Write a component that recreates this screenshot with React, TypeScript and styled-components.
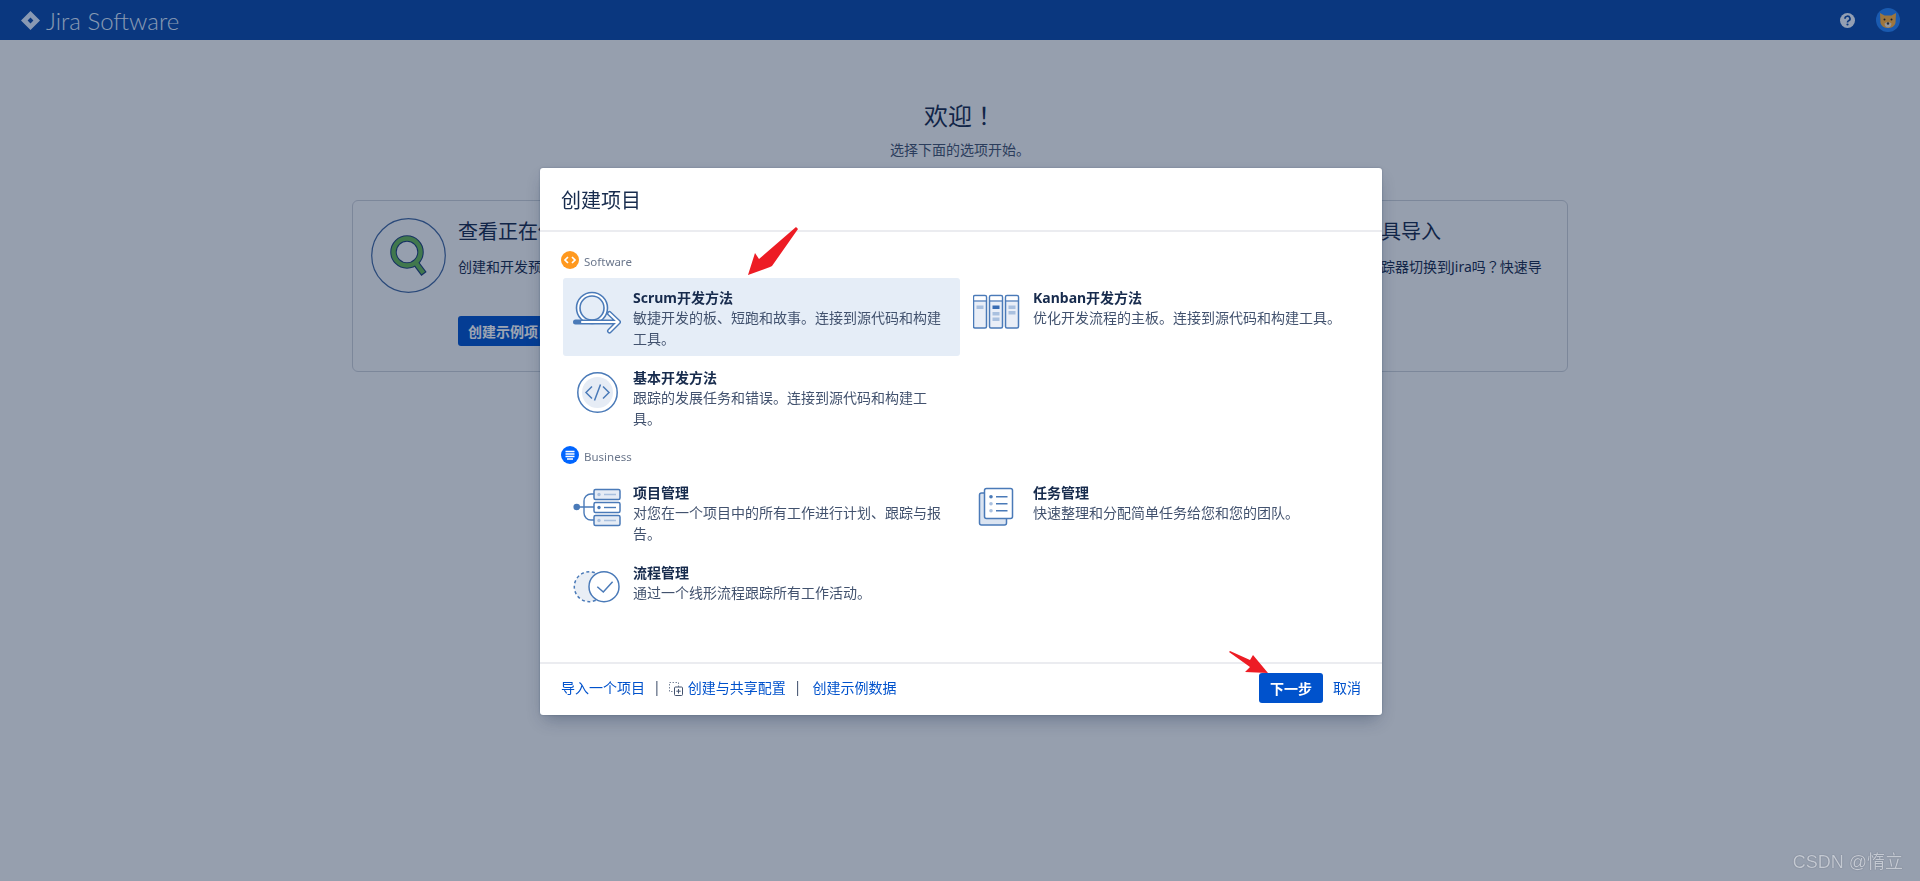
import React from "react";
import styled, { createGlobalStyle } from "styled-components";

const GlobalStyle = createGlobalStyle`
    html, body {
        margin: 0;
        height: 100%;
        overflow: hidden;
        background: #f4f5f7;
        font-family: "Noto Sans", "Noto Sans CJK SC", sans-serif;
        color: #172b4d;
    }
`;

const line = "#4a7ab8";
const pale = "#e6ecf5";
const mid = "#a9c0df";

const ScrumIcon = () => (
    <IconSvg viewBox="0 0 48 48">
        <circle cx="19" cy="18" r="15.5" fill="#fff" stroke={line} strokeWidth="1.6" />
        <circle cx="19" cy="18" r="12" fill="#e5edf7" stroke={line} strokeWidth="1.6" />
        <path d="M2.5 32 H45 M36.5 23.5 L45.5 32 L36.5 41" fill="none" stroke={line} strokeWidth="5" strokeLinecap="round" strokeLinejoin="round" />
        <path d="M9 32 H45 M36.5 23.5 L45.5 32 L36.5 41" fill="none" stroke="#fff" strokeWidth="2.2" strokeLinecap="round" strokeLinejoin="round" />
    </IconSvg>
);

const CodeIcon = () => (
    <IconSvg viewBox="0 0 48 48">
        <circle cx="24.5" cy="22.5" r="19.7" fill="#fff" stroke={line} strokeWidth="1.5" />
        <circle cx="24.5" cy="22.5" r="15.5" fill={pale} />
        <path d="M19 16.5 L13 22.5 L19 28.5 M30 16.5 L36 22.5 L30 28.5 M27.5 14.5 L21.5 30.5" fill="none" stroke={line} strokeWidth="1.5" />
    </IconSvg>
);

const KanbanIcon = () => (
    <IconSvg viewBox="0 0 48 48">
        {[0.5, 16.5, 32.5].map((x) => (
            <g key={x}>
                <rect x={x} y="5.5" width="13" height="32.5" rx="1.5" fill="#e9eef7" stroke={line} strokeWidth="1.5" />
                <path d={`M${x + 1} 6.5 H${x + 12} V10.5 H${x + 1} Z`} fill="#fff" />
                <path d={`M${x} 11 H${x + 13}`} stroke={line} strokeWidth="1.2" />
            </g>
        ))}
        <rect x="3.5" y="15.5" width="7" height="3.5" fill={mid} />
        <rect x="19.5" y="15.5" width="7" height="3.5" fill="#3a6db3" />
        <rect x="19.5" y="22" width="7" height="3.5" fill={mid} />
        <rect x="19.5" y="27.5" width="7" height="3.5" fill={mid} />
        <rect x="35.5" y="15.5" width="7" height="3.5" fill={mid} />
        <rect x="35.5" y="21" width="7" height="3.5" fill={mid} />
    </IconSvg>
);

const TreeIcon = () => (
    <IconSvg viewBox="0 0 48 48">
        <circle cx="3.7" cy="22" r="3.3" fill={line} />
        <path d="M4 22 H21 M21 9 H18 A7 7 0 0 0 11 16 V28 A7 7 0 0 0 18 35 H21" fill="none" stroke={line} strokeWidth="1.4" />
        <rect x="21" y="4.5" width="26" height="10" rx="1.5" fill={pale} stroke={line} strokeWidth="1.5" />
        <rect x="21" y="17.5" width="26" height="10" rx="1.5" fill="#fff" stroke={line} strokeWidth="1.5" />
        <rect x="21" y="30.5" width="26" height="10" rx="1.5" fill={pale} stroke={line} strokeWidth="1.5" />
        <circle cx="26" cy="9.5" r="1.7" fill={mid} />
        <circle cx="26" cy="22.5" r="1.7" fill={line} />
        <circle cx="26" cy="35.5" r="1.7" fill={mid} />
        <path d="M31 9.5 H43 M31 35.5 H43" stroke={mid} strokeWidth="1.4" />
        <path d="M31 22.5 H43" stroke={line} strokeWidth="1.4" />
    </IconSvg>
);

const TaskIcon = () => (
    <IconSvg viewBox="0 0 48 48">
        <rect x="6.5" y="8" width="27" height="32" rx="2" fill="#dbe4f1" stroke={line} strokeWidth="1.5" />
        <rect x="11.5" y="3.5" width="28" height="30" rx="2" fill="#fff" stroke={line} strokeWidth="1.5" />
        <circle cx="18" cy="11.7" r="1.8" fill={line} />
        <circle cx="18" cy="18.7" r="1.8" fill={mid} />
        <circle cx="18" cy="25.7" r="1.8" fill={mid} />
        <path d="M23 11.7 H34.5 M23 18.7 H34.5 M23 25.7 H34.5" stroke={line} strokeWidth="1.5" />
    </IconSvg>
);

const FlowIcon = () => (
    <IconSvg viewBox="0 0 48 48">
        <circle cx="16.3" cy="21.7" r="15" fill="#e9eef5" stroke={line} strokeWidth="1.5" strokeDasharray="3 2.6" />
        <circle cx="31" cy="21.7" r="15" fill="#fff" stroke={line} strokeWidth="1.5" />
        <path d="M24.3 21.7 L30.3 27 L39.6 16.7" fill="none" stroke={line} strokeWidth="1.5" />
    </IconSvg>
);

const MagnifierIcon = () => (
    <svg width="75" height="75" viewBox="0 0 75 75">
        <circle cx="37.5" cy="37.5" r="36.8" fill="none" stroke="#4067a0" strokeWidth="1.2" />
        <path d="M44 44 L53 56" stroke="#1e3f78" strokeWidth="6.5" />
        <circle cx="36" cy="34" r="13.5" fill="none" stroke="#1e3f78" strokeWidth="6.5" />
        <path d="M44.5 44.5 L52.3 55" stroke="#66b556" strokeWidth="4.4" />
        <circle cx="36" cy="34" r="13.5" fill="none" stroke="#66b556" strokeWidth="4.4" />
    </svg>
);

type ProjectRow = { icon: React.ReactNode; title: string; desc: string; selected?: boolean };

const softwareRows: ProjectRow[] = [
    { icon: <ScrumIcon />, title: "Scrum开发方法", desc: "敏捷开发的板、短跑和故事。连接到源代码和构建工具。", selected: true },
    { icon: <KanbanIcon />, title: "Kanban开发方法", desc: "优化开发流程的主板。连接到源代码和构建工具。" },
    { icon: <CodeIcon />, title: "基本开发方法", desc: "跟踪的发展任务和错误。连接到源代码和构建工具。" },
];

const businessRows: ProjectRow[] = [
    { icon: <TreeIcon />, title: "项目管理", desc: "对您在一个项目中的所有工作进行计划、跟踪与报告。" },
    { icon: <TaskIcon />, title: "任务管理", desc: "快速整理和分配简单任务给您和您的团队。" },
    { icon: <FlowIcon />, title: "流程管理", desc: "通过一个线形流程跟踪所有工作活动。" },
];

const Rows = ({ rows }: { rows: ProjectRow[] }) => (
    <RowGrid>
        {rows.map((row) => (
            <Row key={row.title} $selected={row.selected}>
                {row.icon}
                <RowText>
                    <RowTitle>{row.title}</RowTitle>
                    <RowDesc>{row.desc}</RowDesc>
                </RowText>
            </Row>
        ))}
    </RowGrid>
);

export default function App() {
    return (
        <>
            <GlobalStyle />
            <Header>
                <Logo>
                    <svg width="19" height="19" viewBox="0 0 19 19">
                        <path
                            fillRule="evenodd"
                            d="M9.5 0 L19 9.5 L9.5 19 L0 9.5 Z M9.5 6.6 L6.6 9.5 L9.5 12.4 L12.4 9.5 Z"
                            fill="#deebff"
                        />
                    </svg>
                    <LogoText>Jira Software</LogoText>
                </Logo>
                <HeaderIcons>
                    <svg width="15" height="15" viewBox="0 0 15 15">
                        <circle cx="7.5" cy="7.5" r="7.5" fill="#f0f6ff" />
                        <path d="M5 5.7 A2.5 2.4 0 1 1 8.6 7.8 Q7.5 8.3 7.5 9.4" fill="none" stroke="#0b49a8" strokeWidth="1.7" />
                        <circle cx="7.5" cy="11.5" r="1.1" fill="#0b49a8" />
                    </svg>
                    <svg width="24" height="24" viewBox="0 0 24 24">
                        <circle cx="12" cy="12" r="12" fill="#2583fa" />
                        <path d="M4 5 L8.5 7.5 H15.5 L20 5 L19.5 15 Q18 20 12 20 Q6 20 4.5 15 Z" fill="#ffb13d" />
                        <path d="M8.5 15.5 Q12 13 15.5 15.5 Q15 19.5 12 19.5 Q9 19.5 8.5 15.5 Z" fill="#f2e6d8" />
                        <circle cx="8.5" cy="11.5" r="1" fill="#222" />
                        <circle cx="15.5" cy="11.5" r="1" fill="#222" />
                        <circle cx="12" cy="15.5" r="1.2" fill="#333" />
                    </svg>
                </HeaderIcons>
            </Header>

            <Welcome>
                <WelcomeTitle>欢迎<WidePunct>！</WidePunct></WelcomeTitle>
                <WelcomeSub>选择下面的选项开始。</WelcomeSub>
                <StartBox>
                    <StartSide>
                        <MagnifierIcon />
                        <StartText>
                            <StartTitle>查看正在使用的项目</StartTitle>
                            <StartDesc>创建和开发预配置</StartDesc>
                            <SampleButton>创建示例项目</SampleButton>
                        </StartText>
                    </StartSide>
                    <StartSide>
                        <MagnifierIcon />
                        <StartText>
                            <StartTitle>通过其他问题工具导入</StartTitle>
                            <StartDesc>您想要从其他的问题跟踪器切换到Jira吗<WidePunct>？</WidePunct>快速导</StartDesc>
                        </StartText>
                    </StartSide>
                </StartBox>
            </Welcome>

            <Blanket />

            <Modal>
                <ModalHeader>创建项目</ModalHeader>
                <ModalBody>
                    <SectionLabel>
                        <svg width="18" height="18" viewBox="0 0 18 18">
                            <circle cx="9" cy="9" r="9" fill="#ff991f" />
                            <path d="M7 6 L4 9 L7 12 M11 6 L14 9 L11 12" fill="none" stroke="#fff" strokeWidth="1.7" />
                        </svg>
                        <LabelText>Software</LabelText>
                    </SectionLabel>
                    <Rows rows={softwareRows} />
                    <SectionLabel $spaced>
                        <svg width="18" height="18" viewBox="0 0 18 18">
                            <circle cx="9" cy="9" r="9" fill="#0065ff" />
                            <path d="M4.5 5.5 H13.5 M4.5 8 H13.5 M4.5 10.5 H13.5 M6 13 H12" fill="none" stroke="#fff" strokeWidth="1.5" />
                        </svg>
                        <LabelText>Business</LabelText>
                    </SectionLabel>
                    <Rows rows={businessRows} />
                </ModalBody>
                <ModalFooter>
                    <FooterLink>导入一个项目</FooterLink>
                    <Separator>|</Separator>
                    <ConfigIcon width="14" height="14" viewBox="0 0 14 14">
                        <rect x="0.5" y="0.5" width="9" height="9" fill="none" stroke="#7a869a" strokeDasharray="1.5 1.5" />
                        <rect x="5.5" y="5" width="8" height="8.5" rx="1" fill="#fff" stroke="#42526e" />
                        <path d="M9.5 7 V11.5 M7.3 9.2 H11.7" stroke="#42526e" />
                    </ConfigIcon>
                    <FooterLink $indent={5}>创建与共享配置</FooterLink>
                    <Separator>|</Separator>
                    <FooterLink $indent={3}>创建示例数据</FooterLink>
                    <FooterActions>
                        <NextButton>下一步</NextButton>
                        <FooterLink>取消</FooterLink>
                    </FooterActions>
                </ModalFooter>
            </Modal>

            <Pointer $left={745} $top={224} width="54" height="54" viewBox="745 224 54 54">
                <polygon points="796,227 798,229 772,266 770,267 748,275 755,253 759,259" fill="#ed1c24" />
            </Pointer>
            <Pointer $left={1226} $top={649} width="46" height="27" viewBox="1226 649 46 27">
                <polygon points="1229,652 1230,651 1250,660 1253,655 1268,673 1245,672 1250,667" fill="#ed1c24" />
            </Pointer>

            <Watermark>CSDN @惰立</Watermark>
        </>
    );
}

const Header = styled.header`
    display: flex;
    justify-content: space-between;
    align-items: center;
    height: 40px;
    padding: 0 20px 0 21px;
    background: #0b49a8;
`;

const Logo = styled.div`
    display: flex;
    align-items: center;
    gap: 6px;
`;

const LogoText = styled.span`
    font-family: Lato, sans-serif;
    font-size: 24px;
    font-weight: 300;
    color: #deebff;
`;

const HeaderIcons = styled.div`
    display: flex;
    align-items: center;
    gap: 21px;
`;

const Welcome = styled.main`
    display: flex;
    flex-direction: column;
    align-items: center;
    padding-top: 60px;
`;

const WelcomeTitle = styled.h1`
    margin: 0;
    height: 32px;
    font-size: 24px;
    font-weight: 400;
    line-height: 32px;
`;

// the centred full-width marks of the reference come from the TC cut
const WidePunct = styled.span`
    font-family: "Noto Sans CJK TC", sans-serif;
    line-height: 0;
`;

const WelcomeSub = styled.p`
    margin: 8px 0 40px;
    font-size: 14px;
    line-height: 20px;
    color: #42526e;
`;

const StartBox = styled.section`
    display: flex;
    justify-content: space-between;
    box-sizing: border-box;
    width: 1216px;
    height: 172px;
    padding: 17px 21px 17px 18px;
    border: 1px solid #c8ced6;
    border-radius: 6px;
`;

const StartSide = styled.div`
    display: flex;
    gap: 12px;
`;

const StartText = styled.div`
    width: 305px;
`;

const StartTitle = styled.h2`
    margin: 0 0 11px;
    font-size: 20px;
    font-weight: 400;
    line-height: 28px;
    white-space: nowrap;
`;

const StartDesc = styled.p`
    height: 20px;
    margin: 0 0 39px;
    font-size: 14px;
    line-height: 20px;
`;

const SampleButton = styled.button`
    height: 30px;
    padding: 0 10px;
    border: 0;
    border-radius: 3px;
    background: #0052cc;
    color: #fff;
    font: 700 14px "Noto Sans CJK SC", sans-serif;
`;

const Blanket = styled.div`
    position: fixed;
    inset: 0;
    background: rgba(9, 30, 66, 0.4);
`;

const Modal = styled.div`
    position: fixed;
    top: 168px;
    left: 540px;
    display: flex;
    flex-direction: column;
    width: 842px;
    height: 547px;
    border-radius: 3px;
    background: #fff;
    box-shadow: 0 8px 16px -4px rgba(9, 30, 66, 0.32), 0 0 2px rgba(9, 30, 66, 0.3);
`;

const ModalHeader = styled.h2`
    box-sizing: border-box;
    margin: 0;
    height: 64px;
    padding: 1px 21px 0;
    border-bottom: 2px solid #ebecf0;
    font-size: 20px;
    font-weight: 400;
    line-height: 64px;
`;

const ModalBody = styled.div`
    flex: 1;
    padding: 19px 21px 0;
`;

const SectionLabel = styled.div<{ $spaced?: boolean }>`
    display: flex;
    align-items: center;
    gap: 5px;
    height: 18px;
    margin: ${(p) => (p.$spaced ? "10px" : "0")} 0 9px;
    font-size: 11.5px;
    color: #6b778c;
`;

const LabelText = styled.span`
    padding-top: 2px;
`;

const RowGrid = styled.div`
    display: grid;
    grid-template-columns: 397px 397px;
    gap: 2px 3px;
    margin-left: 2px;
`;

const Row = styled.div<{ $selected?: boolean }>`
    display: flex;
    gap: 12px;
    box-sizing: border-box;
    height: 78px;
    padding: 10px;
    border-radius: 3px;
    background: ${(p) => (p.$selected ? "#e5edf7" : "transparent")};
`;

const IconSvg = styled.svg`
    flex: none;
    width: 48px;
    height: 48px;
    margin-top: 2px;
`;

const RowText = styled.div`
    width: 315px;
`;

const RowTitle = styled.div`
    font-size: 14px;
    font-weight: 700;
    line-height: 20px;
`;

const RowDesc = styled.div`
    margin-top: -1px;
    font-size: 14px;
    line-height: 21px;
    color: #42526e;
`;

const ModalFooter = styled.footer`
    display: flex;
    align-items: center;
    box-sizing: border-box;
    height: 53px;
    padding: 0 21px 3px 21px;
    border-top: 2px solid #ebecf0;
`;

const FooterLink = styled.a<{ $indent?: number }>`
    margin: 0 0 3px ${(p) => p.$indent ?? 0}px;
    font-size: 14px;
    color: #0052cc;
`;

const Separator = styled.span`
    margin: 0 8px 3px;
    font-size: 14px;
    color: #42526e;
`;

const ConfigIcon = styled.svg`
    margin-top: 2px;
`;

const FooterActions = styled.div`
    display: flex;
    align-items: center;
    gap: 10px;
    margin-left: auto;
`;

const NextButton = styled.button`
    width: 64px;
    height: 30px;
    padding: 0;
    border: 0;
    border-radius: 3px;
    background: #0052cc;
    color: #fff;
    font: 700 14px "Noto Sans CJK SC", sans-serif;
`;

const Pointer = styled.svg<{ $left: number; $top: number }>`
    position: fixed;
    left: ${(p) => p.$left}px;
    top: ${(p) => p.$top}px;
`;

const Watermark = styled.div`
    position: fixed;
    right: 17px;
    bottom: 8px;
    font-family: "Liberation Sans", "Noto Sans CJK SC", sans-serif;
    font-size: 18px;
    color: #c4c9d2;
    text-shadow: 0 0 1px rgba(40, 50, 70, 0.6);
`;
